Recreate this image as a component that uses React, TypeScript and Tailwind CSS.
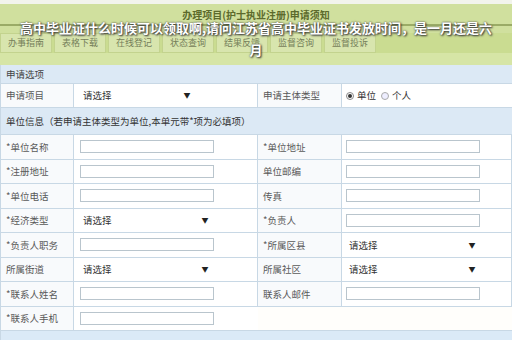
import React from "react";

const tabs = ["办事指南", "表格下载", "在线登记", "状态查询", "结果反馈", "监督咨询", "监督投诉"];

function Label({ text, w = "w-[73px]" }: { text: string; w?: string }) {
  return (
    <div className={`${w} shrink-0 h-full flex items-center pl-[5px] border-r border-[#c8d8e5] bg-[#f8fafc] text-[9.5px] text-[#595959]`}>
      {text}
    </div>
  );
}

function TextBox({ w, ml = "ml-[6px]", edge = "border-r border-[#c8d8e5]" }: { w: string; ml?: string; edge?: string }) {
  return (
    <div className={`${w} shrink-0 h-full flex items-center ${edge}`}>
      <div className={`${ml} w-[134px] h-[13px] border border-[#b9c5cd] bg-white`} />
    </div>
  );
}

function Select({ w, arrow, pl = "pl-[9px]" }: { w: string; arrow: string; pl?: string }) {
  return (
    <div className={`${w} shrink-0 h-full flex items-center border-r border-[#c8d8e5] ${pl} text-[9.5px] text-[#333]`}>
      <span>请选择</span>
      <span className={`${arrow} text-[7px] text-[#222]`}>▼</span>
    </div>
  );
}

function Row({ children, h = "h-[24.5px]" }: { children: React.ReactNode; h?: string }) {
  return <div className={`${h} flex border-b border-[#c8d8e5] bg-white`}>{children}</div>;
}

export default function App() {
  return (
    <div className="relative w-[512px] h-[340px] overflow-hidden bg-white font-['Noto_Sans_CJK_SC',sans-serif]">
      {/* top green band */}
      <div className="h-[4px] bg-[#f2f4ec]" />
      <div className="h-[61px] bg-[#d0e09e] flex flex-col">
        <div className="h-[20px] flex items-center justify-center text-[10px] font-bold text-[#5c6a2c]">
          办理项目(护士执业注册)申请须知
        </div>
        <div className="h-[2px] bg-[#9aab66]" />
        <div className="h-[7px]" />
        <div className="h-[20px] flex gap-[2px] bg-[#cadc91]">
          {tabs.map((t) => (
            <div
              key={t}
              className="w-[52px] h-full flex items-center justify-center border border-[#c3d38e] bg-[#d8e5ae] text-[9px] text-[#76805a]"
            >
              {t}
            </div>
          ))}
        </div>
        <div className="flex-1 bg-[#d6e5a6]" />
      </div>

      {/* form table */}
      <div className="border-l border-[#c8d8e5]">
        <div className="h-[19px] flex items-center pl-[5px] bg-[#dce9f5] border-b border-[#c8d8e5] text-[9.5px] text-[#444]">
          申请选项
        </div>
        <Row h="h-[24px]">
          <Label text="申请项目" />
          <Select w="w-[184px]" arrow="ml-[72px]" />
          <Label text="申请主体类型" w="w-[84px]" />
          <div className="flex-1 flex items-center pl-[4px] gap-[3px] text-[9.5px] text-[#333]">
            <span className="w-[8px] h-[8px] rounded-full border border-[#888] bg-white flex items-center justify-center">
              <span className="w-[4px] h-[4px] rounded-full bg-[#333]" />
            </span>
            <span>单位</span>
            <span className="ml-[2px] w-[8px] h-[8px] rounded-full border border-[#aaa] bg-[#eef]" />
            <span>个人</span>
          </div>
        </Row>
        <div className="h-[27px] flex items-center pl-[5px] bg-[#dce9f5] border-b border-[#c8d8e5] text-[9.5px] text-[#333]">
          单位信息（若申请主体类型为单位,本单元带*项为必填项）
        </div>
        <Row>
          <Label text="*单位名称" />
          <TextBox w="w-[184px]" />
          <Label text="*单位地址" w="w-[84px]" />
          <TextBox w="flex-1" ml="ml-[4px]" />
        </Row>
        <Row>
          <Label text="*注册地址" />
          <TextBox w="w-[184px]" />
          <Label text="单位邮编" w="w-[84px]" />
          <TextBox w="flex-1" ml="ml-[4px]" />
        </Row>
        <Row>
          <Label text="*单位电话" />
          <TextBox w="w-[184px]" />
          <Label text="传真" w="w-[84px]" />
          <TextBox w="flex-1" ml="ml-[4px]" />
        </Row>
        <Row>
          <Label text="*经济类型" />
          <Select w="w-[184px]" arrow="ml-[90px]" />
          <Label text="*负责人" w="w-[84px]" />
          <TextBox w="flex-1" ml="ml-[4px]" />
        </Row>
        <Row>
          <Label text="*负责人职务" />
          <TextBox w="w-[184px]" />
          <Label text="*所属区县" w="w-[84px]" />
          <Select w="flex-1" arrow="ml-[91px]" pl="pl-[7px]" />
        </Row>
        <Row>
          <Label text="所属街道" />
          <Select w="w-[184px]" arrow="ml-[90px]" />
          <Label text="所属社区" w="w-[84px]" />
          <Select w="flex-1" arrow="ml-[91px]" pl="pl-[7px]" />
        </Row>
        <Row>
          <Label text="*联系人姓名" />
          <TextBox w="w-[184px]" />
          <Label text="联系人邮件" w="w-[84px]" />
          <TextBox w="flex-1" ml="ml-[4px]" />
        </Row>
        <Row>
          <Label text="*联系人手机" />
          <TextBox w="w-[184px]" edge="" />
          <div className="flex-1 bg-[#fffefb]" />
        </Row>
        <div className="h-[10px] bg-[#dbeaf7]" />
      </div>

      {/* overlay headline */}
      <div className="absolute left-0 top-[20px] w-[512px] flex flex-col items-center gap-[7px] text-[13px] leading-[15px] font-bold text-white [text-shadow:0_0_2px_#3a3a3a,1px_1px_2px_#333]">
        <span>高中毕业证什么时候可以领取啊,请问江苏省高中毕业证书发放时间，是一月还是六</span>
        <span>月</span>
      </div>
    </div>
  );
}
